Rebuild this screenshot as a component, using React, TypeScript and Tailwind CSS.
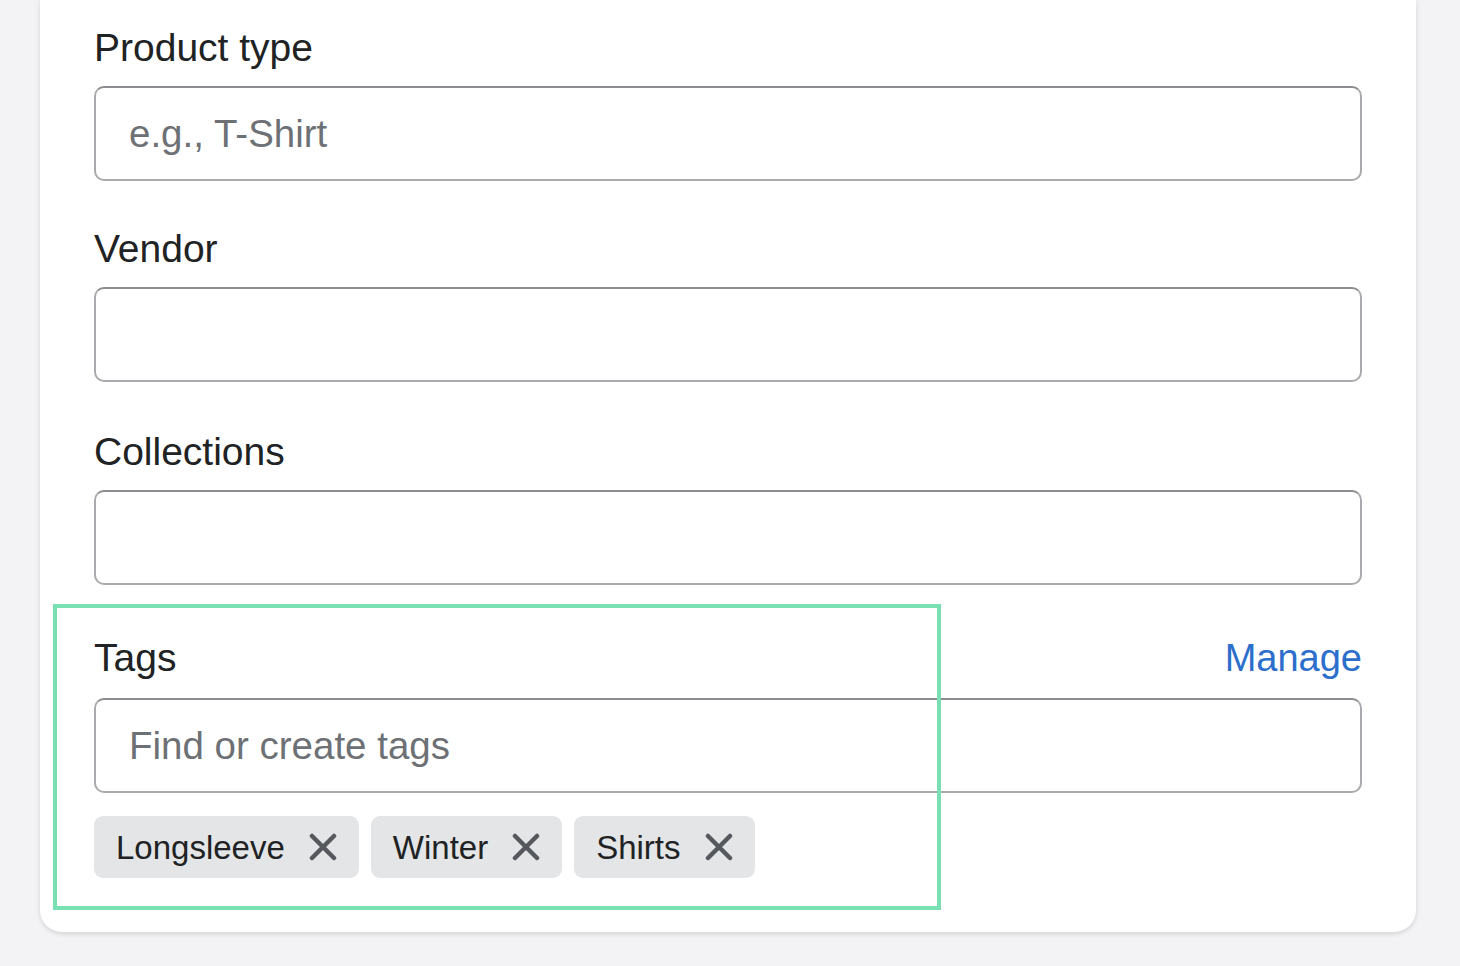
import React from "react";

function XIcon() {
  return (
    <svg width="28" height="28" viewBox="0 0 28 28" className="shrink-0">
      <path d="M3 3 L25 25 M25 3 L3 25" stroke="#55585c" strokeWidth="4.5" strokeLinecap="round" />
    </svg>
  );
}

function Field({ label, placeholder }: { label: string; placeholder?: string }) {
  return (
    <div className="flex flex-col">
      <div className="h-[44px] leading-[44px] text-[39px] text-[#202223]">{label}</div>
      <div className="mt-[16px] h-[95px] rounded-[10px] border-2 border-[#a9aaad] border-t-[#8c8d90] flex items-center px-[33px]">
        {placeholder && <span className="text-[38.5px] text-[#6d7175]">{placeholder}</span>}
      </div>
    </div>
  );
}

function Chip({ text }: { text: string }) {
  return (
    <div className="h-[62px] rounded-[9px] bg-[#e4e5e7] flex items-center pl-[22px] pr-[22px] gap-[24px]">
      <span className="text-[33px] text-[#202223] leading-none">{text}</span>
      <XIcon />
    </div>
  );
}

export default function App() {
  return (
    <div
      className="min-h-screen w-full bg-[#f3f3f5] overflow-hidden"
      style={{ fontFamily: '"Liberation Sans", Arial, sans-serif' }}
    >
      <div className="ml-[40px] w-[1376px] bg-white rounded-b-[22px] shadow-[0_2px_5px_rgba(0,0,0,0.13)] px-[54px] pt-[26px] pb-[54px]">
        <Field label="Product type" placeholder="e.g., T-Shirt" />
        <div className="mt-[46px]">
          <Field label="Vendor" />
        </div>
        <div className="mt-[48px]">
          <Field label="Collections" />
        </div>
        <div className="relative mt-[49px]">
          <div className="flex items-center justify-between h-[48px]">
            <span className="text-[39px] text-[#202223]">Tags</span>
            <span className="text-[38px] text-[#2c6ecb]">Manage</span>
          </div>
          <div className="mt-[16px] h-[95px] rounded-[10px] border-2 border-[#a9aaad] border-t-[#8c8d90] flex items-center px-[33px]">
            <span className="text-[38.5px] text-[#6d7175]">Find or create tags</span>
          </div>
          <div className="mt-[23px] flex gap-[12px]">
            <Chip text="Longsleeve" />
            <Chip text="Winter" />
            <Chip text="Shirts" />
          </div>
          <div className="absolute left-[-41px] top-[-30px] w-[888px] h-[306px] border-[4px] border-[#78e0b2] pointer-events-none" />
        </div>
      </div>
    </div>
  );
}
